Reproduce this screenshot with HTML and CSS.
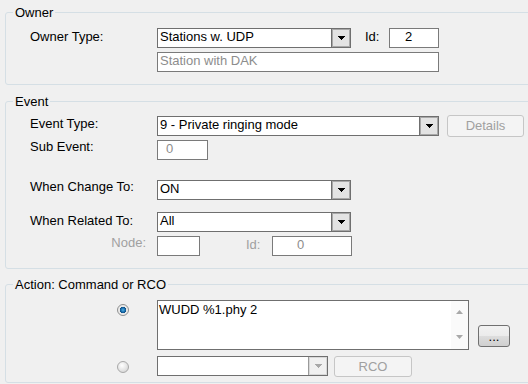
FILE: index.html
```html
<!DOCTYPE html>
<html lang="en">
<head>
  <meta charset="UTF-8" />
  <title>Event Properties</title>
  <link rel="stylesheet" href="styles.css">
</head>
<body>

  <!-- Owner -->
  <fieldset class="group group-owner">
    <legend>Owner</legend>
    <div class="group-body">
      <div class="row">
        <span class="lbl">Owner Type:</span>
        <div class="combo w194">
          <span class="combo-text">Stations w. UDP</span>
          <span class="combo-btn"><svg width="7" height="4" viewBox="0 0 7 4"><polygon points="0,0 7,0 3.5,4" /></svg></span>
        </div>
        <span class="id-lbl">Id:</span>
        <div class="field w50 id-owner">2</div>
      </div>
      <div class="row mt4">
        <span class="lbl"></span>
        <div class="field w282 disabled">Station with DAK</div>
      </div>
    </div>
  </fieldset>

  <!-- Event -->
  <fieldset class="group group-event">
    <legend>Event</legend>
    <div class="group-body">
      <div class="row">
        <span class="lbl">Event Type:</span>
        <div class="combo w282 mt1">
          <span class="combo-text">9 - Private ringing mode</span>
          <span class="combo-btn"><svg width="7" height="4" viewBox="0 0 7 4"><polygon points="0,0 7,0 3.5,4" /></svg></span>
        </div>
        <div class="btn btn-details">Details</div>
      </div>
      <div class="row mt3">
        <span class="lbl lbl-up">Sub Event:</span>
        <div class="field w51 disabled sub-val">0</div>
      </div>
      <div class="row mt20">
        <span class="lbl lbl-up">When Change To:</span>
        <div class="combo w194">
          <span class="combo-text">ON</span>
          <span class="combo-btn"><svg width="7" height="4" viewBox="0 0 7 4"><polygon points="0,0 7,0 3.5,4" /></svg></span>
        </div>
      </div>
      <div class="row mt12">
        <span class="lbl">When Related To:</span>
        <div class="combo w194">
          <span class="combo-text">All</span>
          <span class="combo-btn"><svg width="7" height="4" viewBox="0 0 7 4"><polygon points="0,0 7,0 3.5,4" /></svg></span>
        </div>
      </div>
      <div class="row mt4">
        <span class="lbl lbl-node">Node:</span>
        <div class="field w43"></div>
        <span class="lbl-id2">Id:</span>
        <div class="field w80 disabled node-id">0</div>
      </div>
    </div>
  </fieldset>

  <!-- Action -->
  <fieldset class="group group-action">
    <legend>Action: Command or RCO</legend>
    <div class="group-body">
      <div class="row">
        <span class="lbl"><span class="radio checked"></span></span>
        <div class="memo">
          <div class="memo-text">WUDD %1.phy 2</div>
          <div class="memo-scroll">
            <svg width="7" height="4" viewBox="0 0 7 4"><polygon points="3.5,0 7,4 0,4" /></svg>
            <svg width="7" height="4" viewBox="0 0 7 4"><polygon points="0,0 7,0 3.5,4" /></svg>
          </div>
        </div>
        <div class="btn btn-more">...</div>
      </div>
      <div class="row mt6">
        <span class="lbl"><span class="radio"></span></span>
        <div class="combo w171 combo-off">
          <span class="combo-text"></span>
          <span class="combo-btn"><svg width="7" height="4" viewBox="0 0 7 4"><polygon points="0,0 7,0 3.5,4" /></svg></span>
        </div>
        <div class="btn btn-rco">RCO</div>
      </div>
    </div>
  </fieldset>

</body>
</html>
```

FILE: styles.css
```css
html, body { overflow: hidden; }
body {
  margin: 0;
  width: 528px;
  height: 384px;
  background-color: #f0f0f0;
  color: #000;
  font-family: 'Liberation Sans', Arial, sans-serif;
  font-size: 13px;
}

/* group boxes */
.group {
  margin: 0 -12px 0 5px;
  padding: 0;
  min-width: 0;
  border: 1px solid #d5dfe5;
  border-radius: 3px;
}
.group legend {
  margin-left: 7px;
  padding: 0 2px;
  line-height: 15px;
}
.group-owner { margin-top: 5px; }
.group-event { margin-top: 9px; }
.group-action { margin-top: 8px; }
.group-body { padding: 0 0 12px 24px; }
.group-owner .group-body { padding-top: 8px; }
.group-event .group-body { padding-top: 6px; }
.group-action .group-body { padding-top: 8px; padding-bottom: 5px; }

/* rows */
.row { display: flex; align-items: flex-start; }
.mt1 { margin-top: 1px; }
.mt3 { margin-top: 3px; }
.mt4 { margin-top: 4px; }
.mt6 { margin-top: 6px; }
.mt12 { margin-top: 12px; }
.mt20 { margin-top: 20px; }

.lbl {
  flex: 0 0 127px;
  line-height: 15px;
  padding-top: 1px;
}
.lbl-up { padding-top: 0; margin-top: -1px; }
.lbl-node {
  flex-basis: 116px;
  margin-right: 11px;
  text-align: right;
  color: #a0a0a0;
  margin-top: -2px;
}
.id-lbl { width: 24px; margin-left: 14px; line-height: 15px; padding-top: 1px; }
.lbl-id2 { width: 26px; margin-left: 46px; color: #a0a0a0; line-height: 15px; padding-top: 1px; }

/* inputs */
.field {
  box-sizing: border-box;
  height: 20px;
  border: 1px solid #7a7a7a;
  background-color: #fff;
  padding: 0 2px;
  line-height: 16px;
  white-space: nowrap;
}
.disabled { color: #8d8d8d; }
.w43 { width: 43px; }
.w50 { width: 50px; }
.w51 { width: 51px; }
.w80 { width: 80px; }
.w171 { width: 171px; }
.w194 { width: 194px; }
.w282 { width: 282px; }
.id-owner { padding-left: 15px; }
.sub-val { padding-left: 8px; }
.node-id { padding-left: 24px; }

/* combo boxes */
.combo {
  box-sizing: border-box;
  display: flex;
  height: 20px;
  border: 1px solid #6f6f6f;
  background-color: #fff;
}
.combo-text {
  flex: 1;
  padding-left: 2px;
  line-height: 16px;
  white-space: nowrap;
  overflow: hidden;
}
.combo-btn {
  box-sizing: border-box;
  width: 19px;
  height: 18px;
  border-left: 1px solid #6f6f6f;
  background-color: #e3e3e3;
  box-shadow: inset 1px 1px 0 #a8a8a8, inset -1px -1px 0 #a8a8a8;
  display: flex;
  align-items: center;
  justify-content: center;
}
.combo-btn svg { fill: #000; shape-rendering: crispEdges; }
.combo-off .combo-btn {
  background-color: #f0f0f0;
  box-shadow: inset 1px 1px 0 #d8d8d8, inset -1px -1px 0 #d8d8d8;
  border-left-color: #9a9a9a;
}
.combo-off .combo-btn svg { fill: #a8a8a8; }

/* buttons */
.btn {
  box-sizing: border-box;
  border: 1px solid #c6c6c6;
  border-radius: 3px;
  background-color: #f4f4f4;
  color: #a0a0a0;
  text-align: center;
}
.btn-details {
  width: 77px;
  height: 22px;
  line-height: 20px;
  margin-left: 8px;
}
.btn-rco {
  width: 78px;
  height: 21px;
  line-height: 19px;
  margin-left: 6px;
}
.btn-more {
  align-self: flex-end;
  width: 32px;
  height: 22px;
  margin: 0 0 3px 9px;
  line-height: 22px;
  border-color: #707070;
  color: #000;
  background: linear-gradient(#f2f2f2 0, #ebebeb 50%, #dddddd 50%, #cfcfcf 100%);
}

/* radios */
.radio {
  display: block;
  box-sizing: border-box;
  width: 12px;
  height: 12px;
  margin: 3px 0 0 87px;
  border: 1px solid #8e8f8f;
  border-radius: 50%;
  background: radial-gradient(circle at 40% 35%, #ffffff 0, #dcdcdc 70%, #c8c8c8 100%);
}
.row.mt6 .radio { margin-top: 4px; border-color: #a8a8a8; }
.radio.checked {
  background: radial-gradient(circle, #53b2e6 0, #1a6fae 2px, #0d4f86 3px, #e6e6e6 3.5px, #f6f6f6 100%);
}

/* memo with scroll bar */
.memo {
  box-sizing: border-box;
  display: flex;
  width: 312px;
  height: 50px;
  border: 1px solid #6f6f6f;
  background-color: #fff;
}
.memo-text {
  flex: 1;
  padding: 1px 0 0 1px;
  line-height: 15px;
}
.memo-scroll {
  width: 17px;
  display: flex;
  flex-direction: column;
  justify-content: space-between;
  align-items: center;
  padding: 9px 0 10px;
  background-color: #fafafa;
}
.memo-scroll svg { fill: #a8a8a8; }
```
